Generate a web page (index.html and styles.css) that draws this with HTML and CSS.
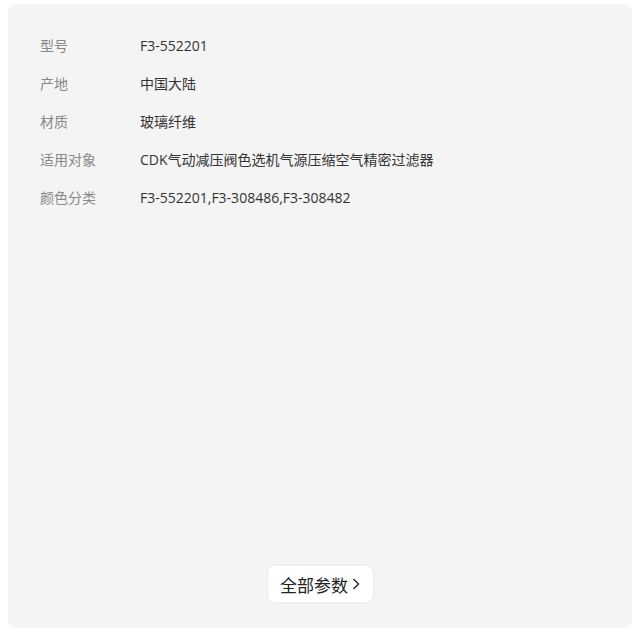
FILE: index.html
```html
<!DOCTYPE html>
<html lang="zh-CN">
<head>
    <meta charset="UTF-8">
    <meta name="viewport" content="width=device-width, initial-scale=1.0">
    <title>商品参数</title>
    <link rel="stylesheet" href="styles.css">
</head>
<body>
    <div class="card">
        <div class="params">
            <div class="param-row">
                <span class="param-label">型号</span>
                <span class="param-value">F3-552201</span>
            </div>
            <div class="param-row">
                <span class="param-label">产地</span>
                <span class="param-value">中国大陆</span>
            </div>
            <div class="param-row">
                <span class="param-label">材质</span>
                <span class="param-value">玻璃纤维</span>
            </div>
            <div class="param-row">
                <span class="param-label">适用对象</span>
                <span class="param-value">CDK气动减压阀色选机气源压缩空气精密过滤器</span>
            </div>
            <div class="param-row">
                <span class="param-label">颜色分类</span>
                <span class="param-value">F3-552201,F3-308486,F3-308482</span>
            </div>
        </div>
        <div class="more">
            <button type="button" class="more-btn">
                全部参数
                <svg class="chevron" width="8" height="14" viewBox="0 0 8 14">
                    <path d="M1.5 2 L6.5 7 L1.5 12" fill="none" stroke="#333" stroke-width="1.5"/>
                </svg>
            </button>
        </div>
    </div>
</body>
</html>
```

FILE: styles.css
```css
body {
    margin: 0;
    padding: 4px 8px;
    background: #fff;
    font-family: "Open Sans", "Noto Sans CJK SC", sans-serif;
}
.card {
    height: 624px;
    box-sizing: border-box;
    background: #f4f4f4;
    border-radius: 8px;
    padding: 22px 32px 25px;
    display: flex;
    flex-direction: column;
}
.param-row {
    display: flex;
    align-items: center;
    height: 38px;
    font-size: 14px;
}
.param-label {
    width: 100px;
    color: #888;
}
.param-value {
    color: #333;
}
.more {
    margin-top: auto;
    display: flex;
    justify-content: center;
}
.more-btn {
    height: 38px;
    width: 107px;
    padding: 0;
    border: 1px solid #ececec;
    border-radius: 8px;
    background: #fff;
    color: #222;
    font-family: inherit;
    font-size: 17px;
    display: flex;
    align-items: center;
    justify-content: center;
    gap: 4px;
}
.chevron {
    display: block;
}
```
